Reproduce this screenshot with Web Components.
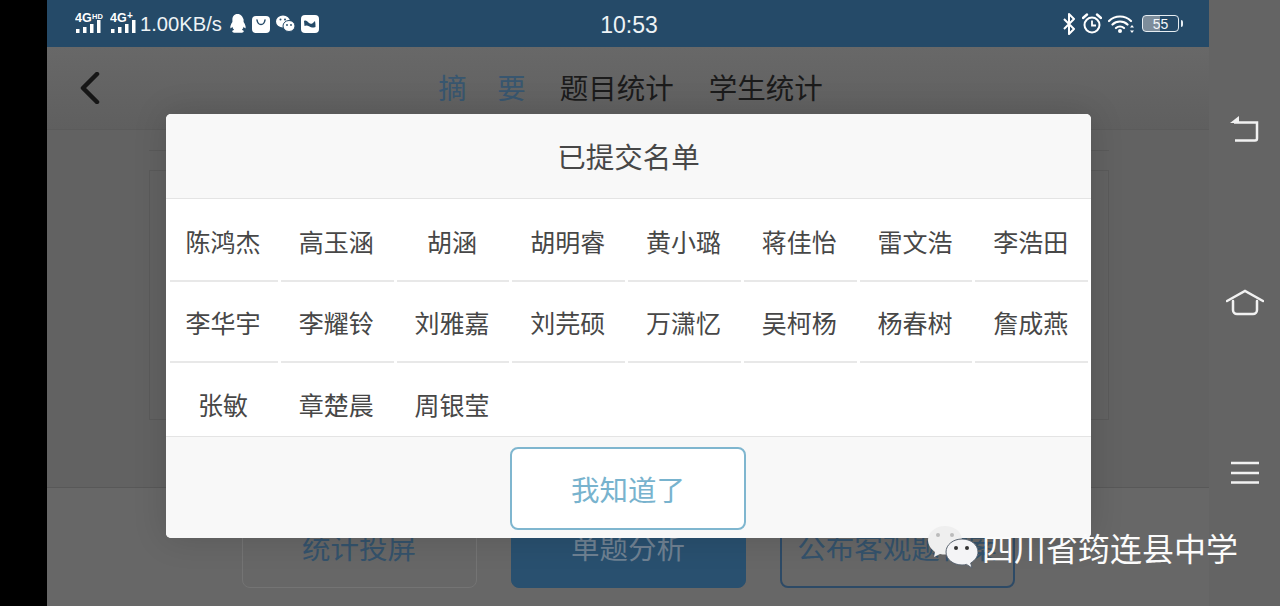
<!DOCTYPE html>
<html lang="zh">
<head>
<meta charset="utf-8">
<title>已提交名单</title>
<style>
  html, body { margin: 0; height: 100%; background: #000; overflow: hidden; }
  body {
    display: flex;
    font-family: "Noto Sans CJK SC", "Noto Sans", sans-serif;
  }
</style>
</head>
<body>
<app-screen>
  <status-bar></status-bar>
  <app-header></app-header>
  <summary-panel></summary-panel>
  <action-bar>
    <action-button>统计投屏</action-button>
    <action-button kind="primary">单题分析</action-button>
    <action-button kind="dark">公布客观题答案</action-button>
  </action-bar>
  <submit-modal title-text="已提交名单" confirm="我知道了">
    <name-cell>陈鸿杰</name-cell><name-cell>高玉涵</name-cell><name-cell>胡涵</name-cell><name-cell>胡明睿</name-cell>
    <name-cell>黄小璐</name-cell><name-cell>蒋佳怡</name-cell><name-cell>雷文浩</name-cell><name-cell>李浩田</name-cell>
    <name-cell>李华宇</name-cell><name-cell>李耀铃</name-cell><name-cell>刘雅嘉</name-cell><name-cell>刘芫硕</name-cell>
    <name-cell>万潇忆</name-cell><name-cell>吴柯杨</name-cell><name-cell>杨春树</name-cell><name-cell>詹成燕</name-cell>
    <name-cell last>张敏</name-cell><name-cell last>章楚晨</name-cell><name-cell last>周银莹</name-cell>
  </submit-modal>
  <water-mark>四川省筠连县中学</water-mark>
</app-screen>
<nav-rail></nav-rail>

<script>
const define = (name, html, setup) => {
  customElements.define(name, class extends HTMLElement {
    constructor() {
      super();
      this.attachShadow({ mode: "open" });
      this.shadowRoot.innerHTML = html;
    }
    connectedCallback() {
      if (setup) setup(this);
    }
  });
};

define("app-screen", `
  <style>
    :host {
      position: relative;
      display: flex;
      flex-direction: column;
      box-sizing: border-box;
      width: 1162px;
      height: 606px;
      margin-left: 47px;
      background: #646464;
    }
  </style>
  <slot></slot>
`);

const signal = (sup, supSize) => `
  <svg class="sig" width="30" height="26" viewBox="0 -4 30 26">
    <text x="0" y="10" font-family="Liberation Sans" font-weight="700" font-size="12.500" fill="#fff">4G</text>
    <text x="17" y="6.500" font-family="Liberation Sans" font-weight="700" font-size="${supSize}" fill="#fff">${sup}</text>
    <rect x="1" y="17" width="3.500" height="4" fill="#fff"/>
    <rect x="8" y="15" width="3.500" height="6" fill="#fff"/>
    <rect x="15" y="12" width="3.500" height="9" fill="#fff"/>
    <rect x="22" y="8" width="3.500" height="13" fill="#fff"/>
  </svg>`;

define("status-bar", `
  <style>
    :host {
      display: grid;
      grid-template-columns: 1fr auto 1fr;
      align-items: center;
      height: 47px;
      flex: none;
      padding: 0 26px 0 28px;
      background: #254a68;
      color: #eef3f6;
      font-family: "Liberation Sans", sans-serif;
      box-sizing: border-box;
    }
    .left, .right { display: flex; align-items: center; }
    .right { justify-content: flex-end; gap: 6px; }
    .sig { margin-bottom: 6px; }
    .sig + .sig { margin-left: 5px; }
    .speed { font-size: 20.200px; margin: 2px 8px 0 0; }
    .time { font-size: 23px; padding-top: 3px; }
    .msg { display: flex; gap: 6px; align-items: center; margin-left: -1px; }
    .batt {
      position: relative;
      display: flex;
      align-items: center;
      justify-content: center;
      box-sizing: border-box;
      width: 37px;
      height: 17px;
      margin-left: 1px;
      border: 1px solid #e6edf2;
      border-radius: 4px;
      color: #f4f7f9;
      font-size: 14px;
      line-height: 14px;
      background: linear-gradient(90deg, #7d8d9b 0 48%, transparent 48%);
    }
    .tip { width: 2px; height: 7px; background: #e6edf2; margin-left: -4px; border-radius: 0 2px 2px 0; }
  </style>
  <div class="left">
    ${signal("HD", 7.5)}
    ${signal("+", 10)}
    <span class="speed">1.00KB/s</span>
    <div class="msg">
      <svg width="17" height="19" viewBox="0 0 17 19"><path fill="#fff" d="M8.500 0C5 0 3.400 2.600 3.400 5.600v2.300C2 10 1 12.300 1.400 14.200c.7.4 1.400-.7 1.900-1.400.3 1.200 1 2.200 1.800 3-1.200.5-2 1-1.800 1.900.2.900 2.600 1.100 5.700 1.100s5.500-.2 5.700-1.100c.2-.9-.6-1.400-1.800-1.900.8-.8 1.500-1.800 1.800-3 .5.700 1.200 1.800 1.900 1.400.4-1.900-.6-4.200-2-6.300V5.600C13.600 2.600 12 0 8.500 0z"/></svg>
      <svg width="18" height="18" viewBox="0 0 18 18"><rect width="18" height="17" y="1" rx="4" fill="#fff"/><path d="M5 5c.5 3 2 4.500 4 4.500S12.500 8 13 5" fill="none" stroke="#254a68" stroke-width="1.500" stroke-linecap="round"/></svg>
      <svg width="19" height="17" viewBox="0 0 19 17"><ellipse cx="7" cy="6.500" rx="7" ry="6" fill="#fff"/><ellipse cx="13" cy="11" rx="6" ry="5.500" fill="#fff" stroke="#254a68" stroke-width="1"/><circle cx="4.500" cy="4.500" r="1" fill="#254a68"/><circle cx="9" cy="4.500" r="1" fill="#254a68"/><circle cx="11" cy="10" r=".9" fill="#254a68"/><circle cx="15" cy="10" r=".9" fill="#254a68"/></svg>
      <svg width="18" height="18" viewBox="0 0 18 18"><rect width="18" height="18" rx="4" fill="#fff"/><path d="M3 6c2-1 3 0 5 2 2 1.500 3 1 6-2 .5 2 .5 4 .5 6-3 1-4 .5-6-.5S5 10 3.500 11z" fill="#254a68"/></svg>
    </div>
  </div>
  <div class="time">10:53</div>
  <div class="right">
    <svg width="13" height="22" viewBox="0 0 13 22"><path d="M1 6l10 10-5 5V1l5 5L1 16" fill="none" stroke="#fff" stroke-width="2" stroke-linejoin="round"/></svg>
    <svg width="20" height="21" viewBox="0 0 20 21"><circle cx="10" cy="12" r="7.500" fill="none" stroke="#fff" stroke-width="2"/><path d="M10 7.500V12.500H14" fill="none" stroke="#fff" stroke-width="1.800"/><path d="M1 5l4-3.500M19 5l-4-3.500" stroke="#fff" stroke-width="2.400" stroke-linecap="round"/></svg>
    <svg width="27" height="20" viewBox="0 0 27 20"><path d="M1 7c6-6 16-6 22 0M4.500 10.500c4-4 11-4 15 0M8 14c2.200-2 5.800-2 8 0" fill="none" stroke="#fff" stroke-width="2.200" stroke-linecap="round"/><circle cx="12" cy="17" r="2" fill="#fff"/><path d="M25 11l-2 2.500h4zM25 19l-2-2.500h4z" fill="#fff" transform="translate(-1 0)"/></svg>
    <div class="batt">55</div><div class="tip"></div>
  </div>
`);

define("app-header", `
  <style>
    :host {
      position: relative;
      display: flex;
      align-items: center;
      justify-content: center;
      flex: none;
      height: 83px;
      box-sizing: border-box;
      padding: 0 0 4px 5px;
      border-bottom: 1px solid #5b5b5b;
      background: linear-gradient(#686868, #5f5f5f);
      color: #1b1b1b;
      font-size: 28.500px;
    }
    svg { position: absolute; left: 33px; top: 25px; }
    .on { color: #38566f; letter-spacing: 1px; margin-right: 33px; }
    .mid { margin-right: 35px; }
  </style>
  <svg width="20" height="32" viewBox="0 0 20 32"><path d="M17 2L3 16l14 14" fill="none" stroke="#161616" stroke-width="4.500" stroke-linecap="round" stroke-linejoin="round"/></svg>
  <span class="on">摘　要</span><span class="mid">题目统计</span><span>学生统计</span>
`);

define("summary-panel", `
  <style>
    :host {
      display: flex;
      flex-direction: column;
      flex: 1;
      box-sizing: border-box;
      padding: 20px 100px 67px 102px;
      background: #626262;
    }
    .tab { height: 1px; background: #5a5a5a; margin-bottom: 19px; }
    .card { flex: 1; border: 1px solid #5a5a5a; }
  </style>
  <div class="tab"></div>
  <div class="card"></div>
`);

define("action-bar", `
  <style>
    :host {
      display: flex;
      justify-content: center;
      gap: 34px;
      flex: none;
      height: 119px;
      box-sizing: border-box;
      padding: 19px 0 18px;
      border-top: 1px solid #585858;
      background: #676767;
    }
  </style>
  <slot></slot>
`);

define("action-button", `
  <style>
    :host {
      display: flex;
      align-items: center;
      justify-content: center;
      box-sizing: border-box;
      width: 235px;
      padding-bottom: 2px;
      border: 1px solid #747474;
      border-radius: 8px;
      color: #34526b;
      font-size: 28.500px;
      white-space: nowrap;
    }
    :host([kind="primary"]) { background: #29506f; border-color: #29506f; color: #6f8192; }
    :host([kind="dark"]) { border: 2px solid #2d4a66; }
  </style>
  <slot></slot>
`);

define("submit-modal", `
  <style>
    :host {
      position: absolute;
      left: 119px;
      top: 114px;
      display: flex;
      flex-direction: column;
      width: 925px;
      height: 424px;
      border-radius: 5px;
      background: #fff;
      overflow: hidden;
      color: #474747;
      box-shadow: 0 0 34px rgba(0, 0, 0, .14);
    }
    header {
      display: flex;
      align-items: center;
      justify-content: center;
      flex: none;
      height: 85px;
      box-sizing: border-box;
      padding-bottom: 2px;
      border-bottom: 1px solid #e4e4e4;
      background: #f8f8f8;
      font-size: 28.500px;
    }
    .grid {
      display: grid;
      grid-template-columns: 108px repeat(7, 1fr);
      grid-template-rows: 81px 81px 1fr;
      column-gap: 3px;
      flex: 1;
      min-height: 0;
      padding: 2px 3px 0 4px;
      background: #fff;
    }
    footer {
      display: flex;
      align-items: flex-start;
      justify-content: center;
      flex: none;
      height: 102px;
      box-sizing: border-box;
      padding: 10px 1px 0 0;
      border-top: 1px solid #e4e4e4;
      background: #f8f8f8;
    }
    button {
      width: 236px;
      height: 83px;
      padding: 0;
      border: 2px solid #7fb6cf;
      border-radius: 8px;
      background: #fff;
      color: #78b3ce;
      font: inherit;
      font-size: 28.500px;
    }
  </style>
  <header></header>
  <div class="grid"><slot></slot></div>
  <footer><button></button></footer>
`, el => {
  el.shadowRoot.querySelector("header").textContent = el.getAttribute("title-text");
  el.shadowRoot.querySelector("button").textContent = el.getAttribute("confirm");
});

define("name-cell", `
  <style>
    :host {
      display: flex;
      align-items: center;
      justify-content: center;
      box-sizing: border-box;
      height: 81px;
      padding: 1px 2px 0 0;
      border-bottom: 2px solid #e8e8e8;
      font-size: 25px;
      white-space: nowrap;
    }
    :host([last]) { height: auto; padding-top: 8px; border-bottom: 0; }
  </style>
  <slot></slot>
`);

define("water-mark", `
  <style>
    :host {
      position: absolute;
      left: 881px;
      top: 524px;
      display: flex;
      align-items: center;
      gap: 4px;
      color: #fbfbfb;
      font-size: 32px;
      line-height: 46px;
      white-space: nowrap;
    }
    svg { flex: none; }
  </style>
  <svg width="50" height="46" viewBox="0 0 50 46">
    <path fill="#efefef" d="M17 2C8 2 0 8 0 16c0 5 3 9 7 12l-1 5 6-3c2 .5 3 .6 5 .6 9 0 17-6 17-14.600S26 2 17 2z"/>
    <path fill="#f4f4f6" stroke="#5a6470" stroke-width="1" d="M34 15c-8.500 0-16 5.500-16 13s7.500 13 16 13c1.500 0 3-.2 4.500-.6L44 44l-1.300-5C47 36.500 50 32.500 50 28c0-7.500-7.500-13-16-13z"/>
    <circle cx="10" cy="11" r="2" fill="#bbb"/><circle cx="24" cy="11" r="2" fill="#bbb"/>
    <circle cx="28" cy="24" r="2" fill="#333"/><circle cx="39" cy="24" r="2" fill="#333"/>
  </svg>
  <slot></slot>
`);

define("nav-rail", `
  <style>
    :host {
      display: flex;
      flex-direction: column;
      align-items: center;
      box-sizing: border-box;
      width: 71px;
      height: 606px;
      padding: 114px 0 0 0;
      background: #646464;
    }
    svg { display: block; fill: none; stroke: #f1f1f1; stroke-width: 2.500; }
    .home { margin-top: 145px; }
    .menu { margin-top: 145px; }
  </style>
  <svg width="34" height="30" viewBox="0 0 34 30"><path fill="#f1f1f1" stroke="none" d="M2 9l9-7v7z"/><path d="M6 8.500h23v16a2 2 0 0 1-2 2H7"/></svg>
  <svg class="home" width="38" height="27" viewBox="0 0 38 27" stroke-linecap="round"><path d="M1 12L19 2l18 10"/><path d="M7 12v9a4 4 0 0 0 4 4h16a4 4 0 0 0 4-4v-9"/></svg>
  <svg class="menu" width="28" height="24" viewBox="0 0 28 24"><path d="M0 2h28M0 12h28M0 21.500h28"/></svg>
`);
</script>
</body>
</html>
